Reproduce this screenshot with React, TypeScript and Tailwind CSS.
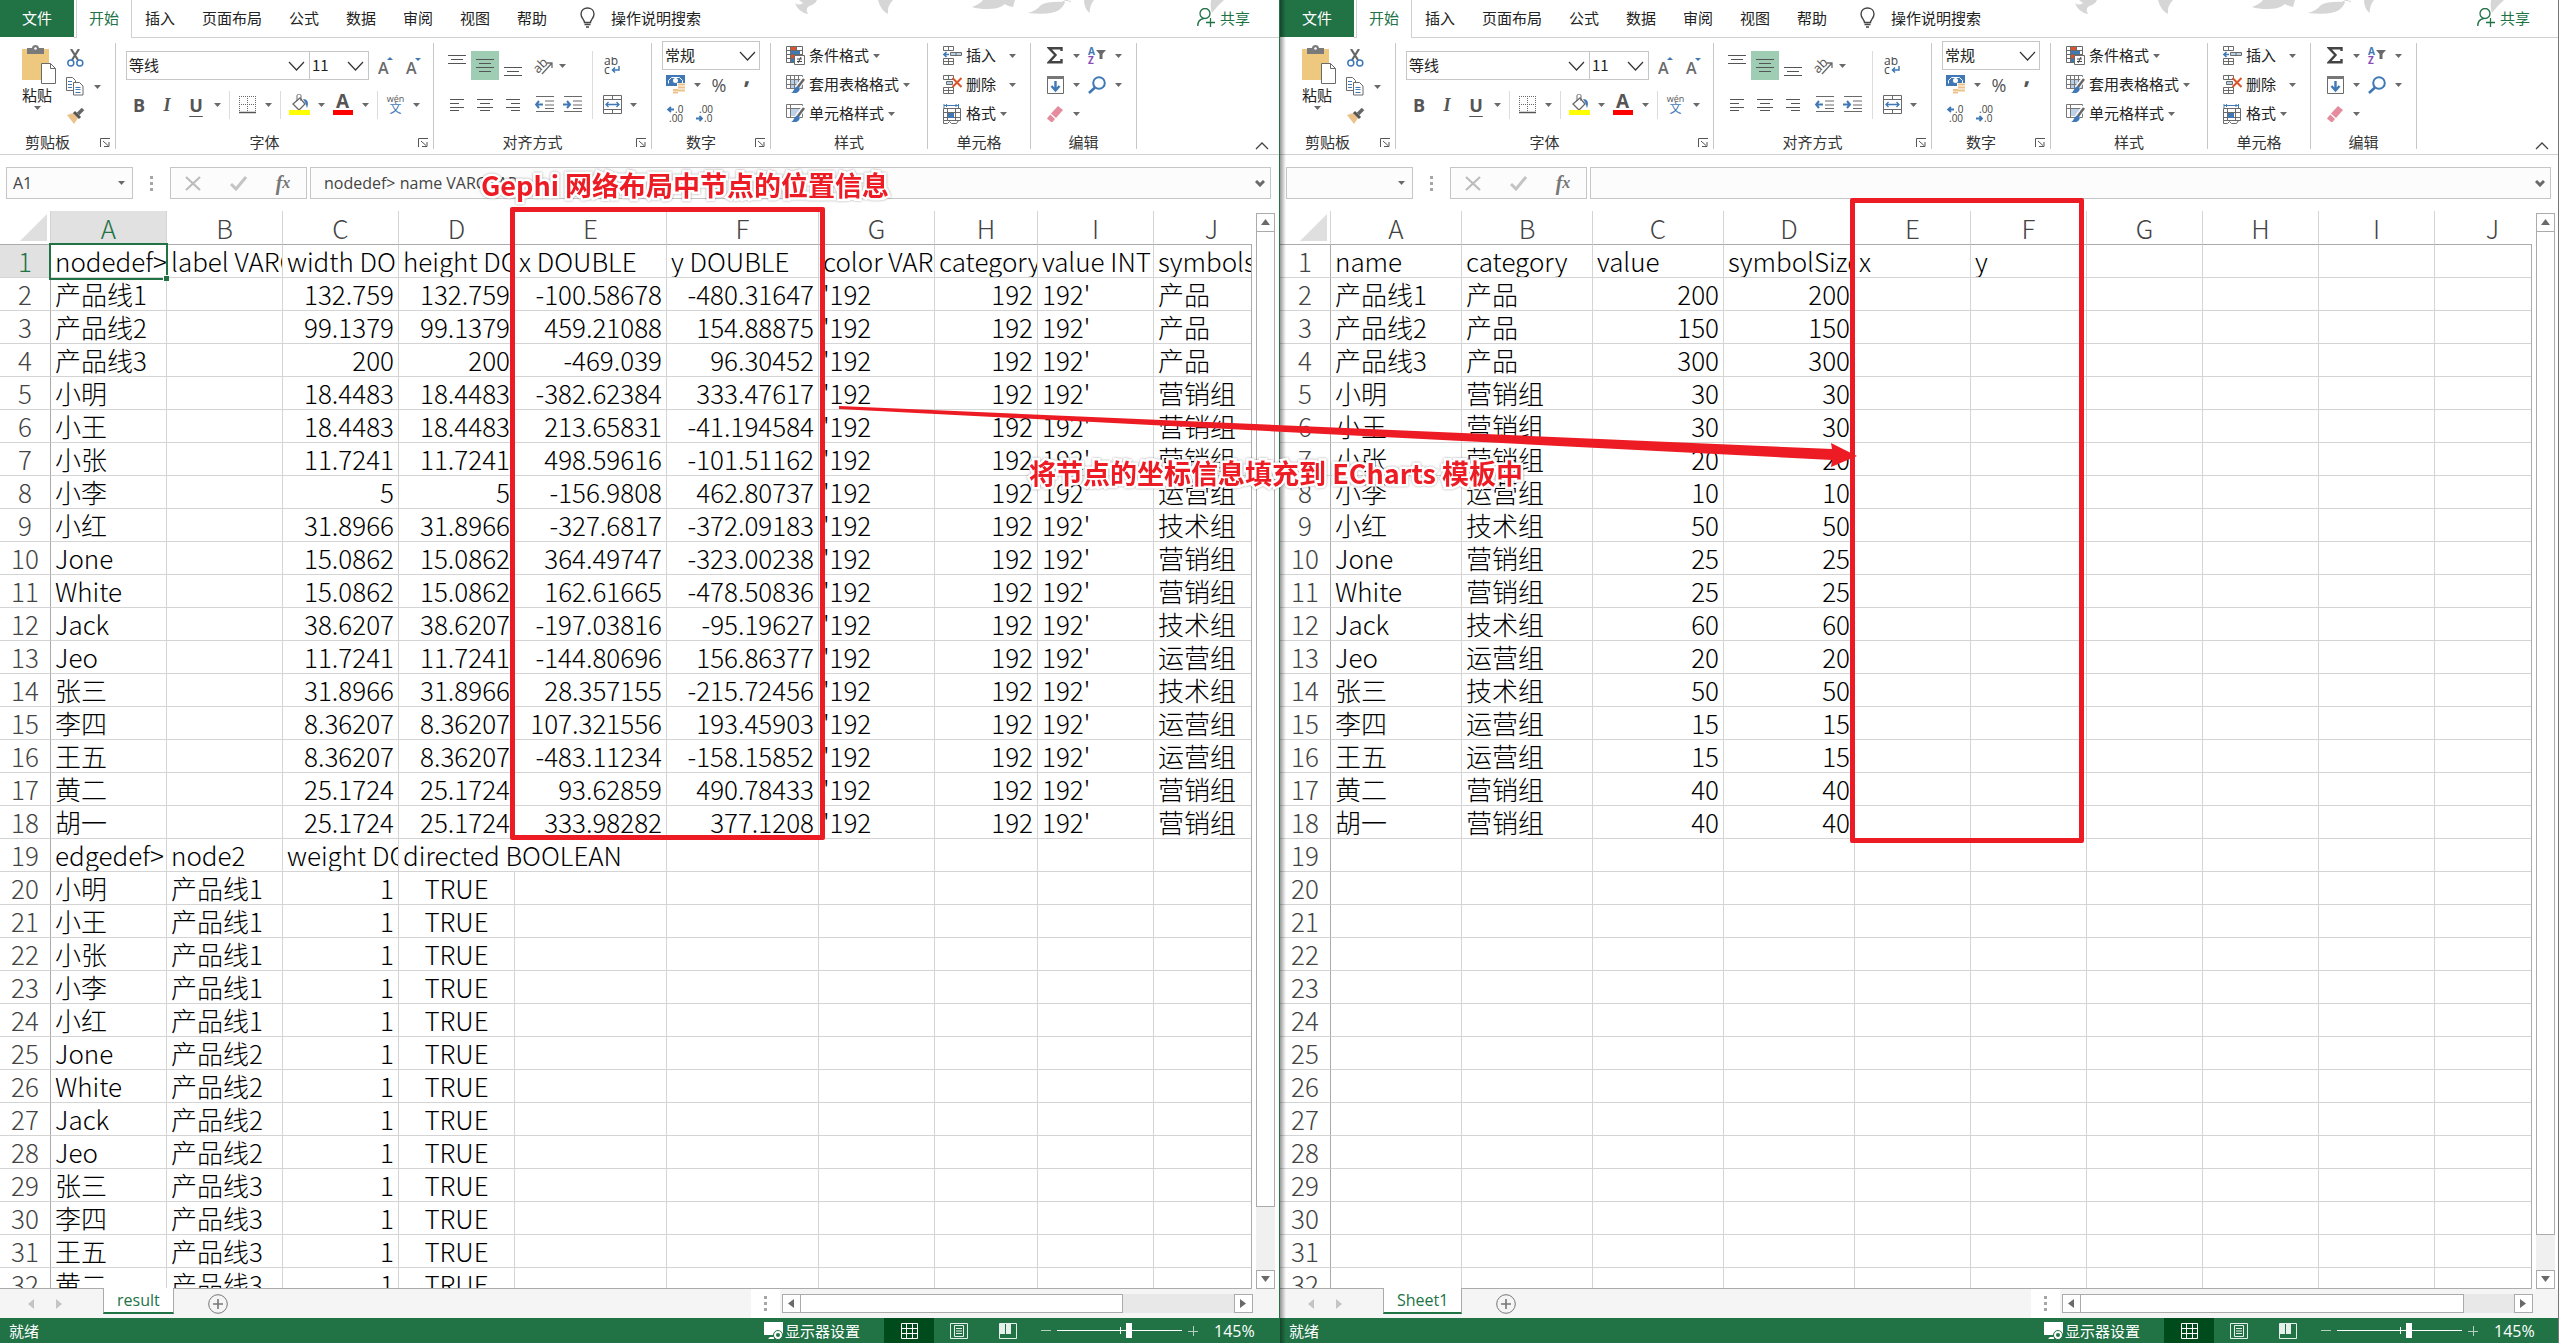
import React, { useState } from 'react';

const UI_FONT = "font-['Noto_Sans_CJK_SC',sans-serif]";
const LATIN_FONT = "font-['Open_Sans','Noto_Sans_CJK_SC',sans-serif]";

interface Sheet {
  name: string;
  activeCell: string;
  formula: string;
  selected: boolean;
  widths: number[];
  rows: string[][];
  hThumb: string;
  vThumb: string;
}

const PEOPLE = ['小明', '小王', '小张', '小李', '小红', 'Jone', 'White', 'Jack', 'Jeo', '张三', '李四', '王五', '黄二', '胡一'];

const NODES: [string, string, string, string, string, string][] = [
  // name, size, x, y, category, value
  ['产品线1', '132.759', '-100.58678', '-480.31647', '产品', '200'],
  ['产品线2', '99.1379', '459.21088', '154.88875', '产品', '150'],
  ['产品线3', '200', '-469.039', '96.30452', '产品', '300'],
  ['小明', '18.4483', '-382.62384', '333.47617', '营销组', '30'],
  ['小王', '18.4483', '213.65831', '-41.194584', '营销组', '30'],
  ['小张', '11.7241', '498.59616', '-101.51162', '营销组', '20'],
  ['小李', '5', '-156.9808', '462.80737', '运营组', '10'],
  ['小红', '31.8966', '-327.6817', '-372.09183', '技术组', '50'],
  ['Jone', '15.0862', '364.49747', '-323.00238', '营销组', '25'],
  ['White', '15.0862', '162.61665', '-478.50836', '营销组', '25'],
  ['Jack', '38.6207', '-197.03816', '-95.19627', '技术组', '60'],
  ['Jeo', '11.7241', '-144.80696', '156.86377', '运营组', '20'],
  ['张三', '31.8966', '28.357155', '-215.72456', '技术组', '50'],
  ['李四', '8.36207', '107.321556', '193.45903', '运营组', '15'],
  ['王五', '8.36207', '-483.11234', '-158.15852', '运营组', '15'],
  ['黄二', '25.1724', '93.62859', '490.78433', '营销组', '40'],
  ['胡一', '25.1724', '333.98282', '377.1208', '营销组', '40'],
];

const EDGES = PEOPLE.slice(0, 13).map((name, i) => [name, `产品线${i < 5 ? 1 : i < 9 ? 2 : 3}`, '1', 'TRUE']);

const RESULT: Sheet = {
  name: 'result',
  activeCell: 'A1',
  formula: 'nodedef> name VARCHAR',
  selected: true,
  widths: [116, 116, 116, 116, 152, 152, 116, 103, 116, 116],
  rows: [
    ['nodedef> name', 'label VARCHAR', 'width DOUBLE', 'height DOUBLE', 'x DOUBLE', 'y DOUBLE', 'color VARCHAR', 'category', 'value INT', 'symbols'],
    ...NODES.map(([name, size, x, y, category]) => [name, '', size, size, x, y, "'192", '192', "192'", category]),
    ['edgedef> node1', 'node2', 'weight DOUBLE', 'directed BOOLEAN'],
    ...EDGES,
  ],
  hThumb: 'w-[323px]',
  vThumb: 'mb-[63px]',
};

const TEMPLATE: Sheet = {
  name: 'Sheet1',
  activeCell: '',
  formula: '',
  selected: false,
  widths: [131, 131, 131, 131, 116, 116, 116, 116, 116, 116],
  rows: [
    ['name', 'category', 'value', 'symbolSize', 'x', 'y'],
    ...NODES.map(([name, , , , category, value]) => [name, category, value, value]),
  ],
  hThumb: 'w-[384px]',
  vThumb: 'mb-[35px]',
};

/* ---------- icons ---------- */

interface IconProps {
  w: number;
  h: number;
  children: React.ReactNode;
}

const Icon: React.FC<IconProps> = ({ w, h, children }) => (
  <svg width={w} height={h} viewBox={`0 0 ${w} ${h}`} fill="none" stroke="#6a6a6a" className="shrink-0">{children}</svg>
);

const Caret = () => <svg width="7" height="4" viewBox="0 0 7 4" className="shrink-0"><path d="M0 0h7L3.5 4z" fill="#6a6a6a" /></svg>;

const PasteIcon = () => (
  <Icon w={34} h={39}>
    <path d="M0 4h27v31H0z" fill="#edc87e" stroke="none" />
    <path d="M5 3h5c0-4 7-4 7 0h5v6H5z" fill="#7a7a7a" stroke="none" />
    <circle cx="13.5" cy="3.5" r="1.3" fill="#fff" stroke="none" />
    <path d="M19.5 18.5h9l5 5v15h-14z" fill="#fff" />
    <path d="M28.5 18.5v5h5" />
  </Icon>
);

const CutIcon = () => (
  <Icon w={17} h={18}>
    <path d="M4 0l7 11M12 0L5 11" stroke="#666" strokeWidth="2.2" />
    <circle cx="3.8" cy="14" r="3" stroke="#3f78b5" strokeWidth="1.5" />
    <circle cx="12.8" cy="14" r="3" stroke="#3f78b5" strokeWidth="1.5" />
  </Icon>
);

const CopyIcon = () => (
  <Icon w={18} h={19}>
    <path d="M.5.5h6l3 3v10h-9z" fill="#fff" />
    <path d="M7.5 5.5h6l3.5 3.5v9h-9.5z" fill="#fff" />
    <path d="M2 4.5h4M2 7.5h4M2 10.5h4M9.5 10.5h5M9.5 12.5h5M9.5 15.5h5" stroke="#3f78b5" />
  </Icon>
);

const BrushIcon = () => (
  <Icon w={18} h={16}>
    <path d="M0 7l6-2 5 5-4 6z" fill="#edc28a" stroke="none" />
    <path d="M7 4l6 6" strokeWidth="3" stroke="#555" />
    <path d="M11 6l5-5" strokeWidth="3.5" stroke="#666" />
  </Icon>
);

const FontSizeIcon = ({ up }: { up: boolean }) => (
  <Icon w={16} h={18}>
    <text x="0" y="17" fontSize="16" fontWeight="600" fill="#6a6a6a" stroke="none" fontFamily="Open Sans">A</text>
    <path d={up ? 'M9 3h6L12 0z' : 'M9 1h6l-3 3z'} fill="#3f78b5" stroke="none" />
  </Icon>
);

const BorderIcon = () => (
  <Icon w={17} h={18}>
    <path d="M.5 0v16M16.5 0v16M8.5 0v16M0 .5h17M0 8.5h17" strokeDasharray="1 1" />
    <path d="M0 16.5h17" stroke="#555" strokeWidth="1.5" />
  </Icon>
);

const FillIcon = () => (
  <Icon w={21} h={21}>
    <path d="M4 10l7-6 5 6-6 6z" fill="#fff" strokeWidth="1.3" />
    <path d="M8 7V2c0-2.5 4-2.5 4 0v5" />
    <path d="M14 5c5 0 6 4 4 9-1-3-1-5-4-9z" fill="#3f78b5" stroke="none" />
    <path d="M0 16h21v5H0z" fill="#ff0" stroke="none" />
  </Icon>
);

const FontColorIcon = () => (
  <Icon w={20} h={21}>
    <text x="3" y="14" fontSize="19" fontWeight="700" fill="#555" stroke="none" fontFamily="Open Sans">A</text>
    <path d="M0 16h20v5H0z" fill="#f00" stroke="none" />
  </Icon>
);

const LinesIcon = ({ d, h }: { d: string; h: number }) => <Icon w={18} h={h}><path d={d} stroke="#555" /></Icon>;

const ALIGN_TOP = 'M0 .5h18M3 4.5h12M0 8.5h18';
const ALIGN_MIDDLE = 'M0 .5h18M3 4.5h12M0 8.5h18M3 12.5h12';
const TEXT_LEFT = 'M2 .5h14M2 4.5h9M2 8.5h14M2 11.5h9';
const TEXT_CENTER = 'M1 .5h16M4 4.5h10M1 8.5h16M4 11.5h10';
const TEXT_RIGHT = 'M2 .5h14M7 4.5h9M2 8.5h14M7 11.5h9';

const OrientationIcon = () => (
  <Icon w={20} h={18}>
    <text x="1" y="14" fontSize="13" fill="#555" stroke="none" fontFamily="Open Sans" transform="rotate(-45 6 12)">ab</text>
    <path d="M8 17L18 6M13 6h5v5" strokeWidth="1.3" />
  </Icon>
);

const IndentIcon = ({ out }: { out: boolean }) => (
  <Icon w={19} h={17}>
    <path d="M1 .5h18M10 5h9M10 9h9M1 15.5h18M10 12.5h9" />
    <path d={out ? 'M8 8.5H1M4 5L1 8.5 4 12' : 'M0 8.5h7M4 5l3 3.5L4 12'} stroke="#3f78b5" strokeWidth="2" />
  </Icon>
);

const WrapIcon = () => (
  <Icon w={16} h={18}>
    <text x="0" y="8" fontSize="12" fill="#444" stroke="none" fontFamily="Open Sans">ab</text>
    <text x="0" y="17" fontSize="12" fill="#444" stroke="none" fontFamily="Open Sans">c</text>
    <path d="M15 9v4H9M11 10.5L8.5 13l2.5 2.5" stroke="#3f78b5" strokeWidth="1.5" />
  </Icon>
);

const MergeIcon = () => (
  <Icon w={19} h={19}>
    <path d="M.5.5h18v18H.5zM.5 4.5h18M.5 14.5h18M9.5.5v4M9.5 14.5v4" />
    <path d="M3 9.5h13M5.5 7L3 9.5 5.5 12M13.5 7l2.5 2.5-2.5 2.5" stroke="#3f78b5" strokeWidth="1.3" />
  </Icon>
);

const CurrencyIcon = () => (
  <Icon w={20} h={19}>
    <path d="M0 0h19v11H0z" fill="#3f78b5" stroke="none" />
    <path d="M2.5 8.5v-3l3-3h8l3 3v3" stroke="#fff" />
    <circle cx="9.5" cy="5.5" r="2.5" fill="#fff" stroke="none" />
    <path d="M11 8h8v11H6v-5h5z" fill="#fff" stroke="none" />
    <path d="M12 9.5h7M12 12.5h7M12 15.5h7M7 15h5M7 17.5h5" stroke="#edc28a" strokeWidth="2" />
  </Icon>
);

const DecimalIcon = ({ more }: { more: boolean }) => (
  <Icon w={18} h={18}>
    <text x={more ? 8 : 4} y="8" fontSize="10" fill="#444" stroke="none" fontFamily="Open Sans">{more ? '.0' : '.00'}</text>
    <text x={more ? 2 : 9} y="17" fontSize="10" fill="#444" stroke="none" fontFamily="Open Sans">{more ? '.00' : '.0'}</text>
    <path d={more ? 'M7 4.5H1M4 2L1 4.5 4 7' : 'M1 13.5h6M4.5 11L7 13.5 4.5 16'} stroke="#3f78b5" strokeWidth="1.8" />
  </Icon>
);

const ConditionalIcon = () => (
  <Icon w={19} h={19}>
    <path d="M.5.5h16v16H.5zM4.5.5v16M10.5.5v16M.5 4.5h16M.5 8.5h16M.5 12.5h16" />
    <path d="M5 1h5v3H5zM5 9h4v3H5z" fill="#d9532c" stroke="none" />
    <path d="M5 5h9v3H5zM5 13h3v3H5z" fill="#3f78b5" stroke="none" />
    <path d="M8.5 9.5h10v9h-10z" fill="#fff" />
    <path d="M11 13h5M11 15.5h5M15 11l-3 6" stroke="#444" />
  </Icon>
);

const TableStyleIcon = ({ solid }: { solid?: boolean }) => (
  <Icon w={19} h={19}>
    <path d={solid ? 'M4 4h10v8H4z' : 'M5 5h12v9H5z'} fill="#bcd0e6" stroke="none" />
    <path d={solid ? 'M.5.5h16v13H.5zM4.5.5v13M.5 4.5h16' : 'M.5.5h16v13H.5zM4.5.5v13M8.5.5v13M12.5.5v13M.5 4.5h16M.5 9.5h16'} stroke="#777" />
    <path d="M18.5 3L11 13" stroke="#fff" strokeWidth="5" />
    <path d="M18 4l-6 8" stroke="#666" strokeWidth="2.5" />
    <path d="M12 11c3 2 2 6-2 7H5c3-1 3-6 7-7z" fill="#3f78b5" stroke="none" />
  </Icon>
);

const InsertIcon = () => (
  <Icon w={19} h={19}>
    <path d="M.5.5h10v4H.5zM5.5.5v4M.5 12.5h10v6H.5zM5.5 12.5v6M.5 15.5h10" />
    <path d="M7.5 6.5h11v3h-11zM13 6.5v3" fill="#bcd0e6" />
    <path d="M6 8.5H1M3.5 6L1 8.5 3.5 11" stroke="#3f78b5" strokeWidth="1.6" />
  </Icon>
);

const DeleteIcon = () => (
  <Icon w={19} h={19}>
    <path d="M.5.5h10v4H.5zM5.5.5v4M.5 12.5h10v6H.5zM5.5 12.5v6M.5 15.5h10" />
    <path d="M3.5 6.5h6v3h-6z" fill="#bcd0e6" />
    <path d="M9.5 3l9 9M18.5 3l-9 9" stroke="#d9532c" strokeWidth="2" />
  </Icon>
);

const FormatIcon = () => (
  <Icon w={19} h={20}>
    <path d="M1 1.5h15M1 0v4M15.5 0v4M3.5 0v3M13 0v3" stroke="#3f78b5" />
    <path d="M.5 4.5h17v12H.5zM4.5 4.5v12M12.5 4.5v12M.5 8.5h17M.5 13.5h17M.5 16.5v3h4l2-2 2 2h5l2-3" />
    <path d="M5 9h6v5H5z" fill="#3f78b5" stroke="none" />
  </Icon>
);

const SumIcon = () => <Icon w={16} h={17}><path d="M14.5 4V1.2H2L8.5 8 2 15.2h12.5V12" strokeWidth="2.4" stroke="#444" /></Icon>;

const SortIcon = () => (
  <Icon w={18} h={18}>
    <text x="0" y="8" fontSize="10" fontWeight="700" fill="#3f78b5" stroke="none" fontFamily="Open Sans">A</text>
    <text x="0" y="17" fontSize="10" fontWeight="700" fill="#8a4fb5" stroke="none" fontFamily="Open Sans">Z</text>
    <path d="M8 3h10l-3.5 4v5h-3V7z" fill="#6a6a6a" stroke="none" />
  </Icon>
);

const FillDownIcon = () => (
  <Icon w={17} h={18}>
    <path d="M.5 1.5h16v16H.5z" />
    <path d="M0 0h17v3H0z" fill="#777" stroke="none" />
    <path d="M8.5 5v9M4.5 10l4 4.5 4-4.5" stroke="#3f78b5" strokeWidth="2.4" />
  </Icon>
);

const FindIcon = () => (
  <Icon w={18} h={18}>
    <circle cx="11" cy="7" r="5.8" stroke="#3f78b5" strokeWidth="2" />
    <path d="M7 11.5L1 17" stroke="#3f78b5" strokeWidth="2.6" />
  </Icon>
);

const EraserIcon = () => (
  <Icon w={16} h={16}>
    <path d="M11 0l5 4L9 12 4 7.5z" fill="#e58b9d" stroke="none" />
    <path d="M3.2 8.5L8 13l-2.5 3H4l-4-3.5z" fill="#e58b9d" stroke="none" />
  </Icon>
);

const Chevron = () => <svg width="17" height="10" viewBox="0 0 17 10" fill="none" stroke="#333" strokeWidth="1.2" className="pointer-events-none shrink-0"><path d="M1 1l7.5 8L16 1" /></svg>;

/* ---------- ribbon ---------- */

interface ToolProps {
  label: string;
  className?: string;
  children: React.ReactNode;
}

const Tool: React.FC<ToolProps> = ({ label, className = 'w-7', children }) => (
  <button type="button" aria-label={label} className={`flex h-[29px] shrink-0 items-center justify-center ${className}`}>{children}</button>
);

const More = ({ label }: { label: string }) => <Tool label={`${label}选项`} className="w-[14px]"><Caret /></Tool>;

const Divider = () => <div className="flex w-[10px] justify-center"><div className="h-7 w-px bg-[#dcdcdc]" /></div>;

interface GroupProps {
  title: string;
  width: string;
  launcher?: boolean;
  children: React.ReactNode;
}

const Group: React.FC<GroupProps> = ({ title, width, launcher, children }) => (
  <>
    <section className={`flex shrink-0 flex-col ${width}`}>
      <div className="flex-1">{children}</div>
      <div className="mb-1 flex h-4 items-center text-[15px] leading-4 text-[#333]">
        <h3 className="flex-1 text-center">{title}</h3>
        {launcher && (
          <button type="button" aria-label={`${title}设置`} className="flex w-5 justify-center">
            <svg width="10" height="9" viewBox="0 0 10 9" fill="none" stroke="#555"><path d="M.5 9V.5H10M3 3l5 4.5M9 4v4.5H4" /></svg>
          </button>
        )}
      </div>
    </section>
    <div className="my-[5px] w-px shrink-0 bg-[#c8c8c8]" />
  </>
);

interface ComboProps {
  label: string;
  value: string;
  className: string;
}

const Combo: React.FC<ComboProps> = ({ label, value, className }) => (
  <div className={`flex h-[29px] items-center border border-[#c6c6c6] bg-white ${className}`}>
    <select aria-label={label} defaultValue={value} className="h-[27px] min-w-0 flex-1 appearance-none bg-transparent pb-[2px] pl-[2px] text-[15px] leading-6 text-[#222] outline-none">
      <option>{value}</option>
    </select>
    <Chevron />
  </div>
);

interface CommandProps {
  icon: React.ReactNode;
  label: string;
  wide?: boolean;
}

const Command: React.FC<CommandProps> = ({ icon, label, wide }) => (
  <button type="button" className="flex h-[29px] items-center whitespace-nowrap text-[15px] leading-5 text-[#222]">
    <span className="w-[23px]">{icon}</span>
    <span className="pb-[2px]">{label}</span>
    <span className={wide ? 'ml-[13px]' : 'ml-1'}><Caret /></span>
  </button>
);

const TABS = ['插入', '页面布局', '公式', '数据', '审阅', '视图', '帮助'];

const TabBar = () => (
  <nav className="relative flex h-[38px] shrink-0 items-end text-[15px] leading-5">
    <svg width="440" height="15" viewBox="0 0 440 15" fill="#d6d6d6" className="absolute right-[49px] top-0">
      <path d="M5 3Q9 6 13 3L9 0H27Q26 3 22 5Q14 7 18 14Q8 12 5 3z" />
      <path d="M88 0H103Q97 6 98 14Q91 11 88 0z" />
      <path d="M182 7Q190 4 193 0H217Q214 9 198 9Q188 9 182 7z" />
      <path d="M208 0H225L223 7Q216 6 208 0z" />
      <path d="M238 13Q246 11 251 5Q258 1 275 2Q272 12 257 13.5Q246 14 238 13z" />
      <path d="M270 4q6-6 11-2" fill="none" stroke="#d6d6d6" />
      <path d="M294 0H304Q299 6 300 13Q294 9 294 0z" />
      <path d="M421 0H434Q427 6 422 13Q420 8 421 0z" />
    </svg>
    <button type="button" className="h-[37px] w-[74px] self-start bg-[#217346] pb-[2px] text-white">文件</button>
    <div className="w-[2px] self-stretch border-b border-[#d0d0d0]" />
    <button type="button" className="h-full w-14 border-x border-[#d0d0d0] pb-[3px] text-[#217346]">开始</button>
    <div className="flex flex-1 items-center self-stretch border-b border-[#d0d0d0] pb-[2px] pl-[13px] text-[#222]">
      <div className="flex gap-[27px]">
        {TABS.map(tab => <button key={tab} type="button">{tab}</button>)}
      </div>
      <svg width="15" height="21" viewBox="0 0 15 21" fill="none" stroke="#444" strokeWidth="1.4" className="ml-[33px]">
        <path d="M4.5 15.5c0-3-3.5-4-3.5-8.5 0-8 13-8 13 0 0 4.5-3.5 5.5-3.5 8.5zM4.5 17.5h6M6 20h3" />
      </svg>
      <button type="button" className="ml-4">操作说明搜索</button>
      <button type="button" className="relative ml-auto mr-[29px] flex items-center gap-1 text-[#217346]">
        <svg width="19" height="19" viewBox="0 0 19 19" fill="none" stroke="#217346" strokeWidth="1.3">
          <circle cx="8" cy="5.5" r="5" />
          <path d="M.7 18c0-5 3-7 6-7.5M9 14.5h9M13.5 10v9" />
        </svg>
        共享
      </button>
    </div>
  </nav>
);

const Ribbon = () => (
  <div className="flex h-[117px] shrink-0 border-b border-[#d0d0d0]">
    <Group title="剪贴板" width="w-[115px]" launcher>
      <div className="flex pl-[2px] pt-[7px]">
        <button type="button" className="flex w-[58px] flex-col items-start pl-5 text-[15px] leading-[22px] text-[#222]">
          <PasteIcon />
          <span>粘贴</span>
          <span className="ml-3"><Caret /></span>
        </button>
        <div className="-mt-[2px]">
          <Tool label="剪切" className="w-[30px]"><CutIcon /></Tool>
          <div className="flex">
            <Tool label="复制" className="w-[30px]"><CopyIcon /></Tool>
            <More label="复制" />
          </div>
          <Tool label="格式刷" className="w-[32px]"><BrushIcon /></Tool>
        </div>
      </div>
    </Group>

    <Group title="字体" width="w-[317px]" launcher>
      <div className="flex flex-col gap-[10px] pl-[10px] pt-[13px]">
        <div className="flex">
          <Combo label="字体" value="等线" className="w-[184px] pr-1" />
          <Combo label="字号" value="11" className="-ml-px w-[60px] pr-1" />
          <Tool label="增大字号" className="ml-[3px] w-7"><FontSizeIcon up /></Tool>
          <Tool label="减小字号"><FontSizeIcon up={false} /></Tool>
        </div>
        <div className={`flex items-center text-lg text-[#555] ${LATIN_FONT}`}>
          <Tool label="加粗" className="w-[26px] font-bold">B</Tool>
          <Tool label="倾斜" className="w-[30px] font-['Liberation_Serif',serif] font-bold italic">I</Tool>
          <Tool label="下划线" className="w-7 font-bold underline underline-offset-4">U</Tool>
          <More label="下划线" />
          <Divider />
          <Tool label="边框" className="w-[27px]"><BorderIcon /></Tool>
          <More label="边框" />
          <Divider />
          <Tool label="填充颜色" className="w-[29px]"><FillIcon /></Tool>
          <More label="填充颜色" />
          <Tool label="字体颜色" className="w-[30px]"><FontColorIcon /></Tool>
          <More label="字体颜色" />
          <Divider />
          <Tool label="拼音" className="w-[27px] flex-col">
            <span className="text-[9px] leading-[8px]">wén</span>
            <span className="text-[12px] leading-[12px] text-[#3f78b5]">文</span>
          </Tool>
          <More label="拼音" />
        </div>
      </div>
    </Group>

    <Group title="对齐方式" width="w-[217px]" launcher>
      <div className="flex pl-[9px] pt-[13px]">
        <div className="flex w-[143px] flex-col gap-[10px]">
          <div className="flex">
            <Tool label="顶端对齐" className="w-7 pb-3"><LinesIcon d={ALIGN_TOP} h={9} /></Tool>
            <Tool label="垂直居中" className="w-7 bg-[#9fcdb3]"><LinesIcon d={ALIGN_MIDDLE} h={13} /></Tool>
            <Tool label="底端对齐" className="w-7 pt-3"><LinesIcon d={ALIGN_TOP} h={9} /></Tool>
            <Tool label="方向" className="ml-[3px] w-7"><OrientationIcon /></Tool>
            <Tool label="方向选项" className="w-2"><Caret /></Tool>
          </div>
          <div className="flex">
            <Tool label="左对齐"><LinesIcon d={TEXT_LEFT} h={12} /></Tool>
            <Tool label="居中"><LinesIcon d={TEXT_CENTER} h={12} /></Tool>
            <Tool label="右对齐"><LinesIcon d={TEXT_RIGHT} h={12} /></Tool>
            <Tool label="减少缩进量" className="ml-[3px] w-7"><IndentIcon out /></Tool>
            <Tool label="增加缩进量"><IndentIcon out={false} /></Tool>
          </div>
        </div>
        <div className="ml-[6px] h-[68px] w-px bg-[#dcdcdc]" />
        <div className="ml-[5px] flex flex-col gap-[10px]">
          <Tool label="自动换行"><WrapIcon /></Tool>
          <div className="flex">
            <Tool label="合并后居中"><MergeIcon /></Tool>
            <More label="合并后居中" />
          </div>
        </div>
      </div>
    </Group>

    <Group title="数字" width="w-[118px]" launcher>
      <div className="px-[10px] pt-[3px]">
        <Combo label="数字格式" value="常规" className="w-full pr-[3px]" />
        <div className={`flex text-[#555] ${LATIN_FONT}`}>
          <Tool label="会计数字格式"><CurrencyIcon /></Tool>
          <More label="会计数字格式" />
          <Tool label="百分比样式" className="w-[30px] text-lg">%</Tool>
          <Tool label="千位分隔样式" className="w-[26px] pb-5 text-2xl font-bold">,</Tool>
        </div>
        <div className="flex">
          <Tool label="增加小数位数"><DecimalIcon more /></Tool>
          <Tool label="减少小数位数"><DecimalIcon more={false} /></Tool>
        </div>
      </div>
    </Group>

    <Group title="样式" width="w-[156px]">
      <div className="flex flex-col items-start pl-[15px] pt-[3px]">
        <Command icon={<ConditionalIcon />} label="条件格式" />
        <Command icon={<TableStyleIcon />} label="套用表格格式" />
        <Command icon={<TableStyleIcon solid />} label="单元格样式" />
      </div>
    </Group>

    <Group title="单元格" width="w-[102px]">
      <div className="flex flex-col items-start pl-[15px] pt-[3px]">
        <Command icon={<InsertIcon />} label="插入" wide />
        <Command icon={<DeleteIcon />} label="删除" wide />
        <Command icon={<FormatIcon />} label="格式" />
      </div>
    </Group>

    <Group title="编辑" width="w-[105px]">
      <div className="pl-[10px] pt-[3px]">
        <div className="flex">
          <Tool label="求和"><SumIcon /></Tool>
          <More label="求和" />
          <Tool label="排序和筛选"><SortIcon /></Tool>
          <More label="排序和筛选" />
        </div>
        <div className="flex">
          <Tool label="填充"><FillDownIcon /></Tool>
          <More label="填充" />
          <Tool label="查找和选择"><FindIcon /></Tool>
          <More label="查找和选择" />
        </div>
        <div className="flex">
          <Tool label="清除"><EraserIcon /></Tool>
          <More label="清除" />
        </div>
      </div>
    </Group>

    <button type="button" aria-label="折叠功能区" className="mb-1 ml-auto mr-[10px] self-end">
      <svg width="14" height="8" viewBox="0 0 14 8" fill="none" stroke="#444" strokeWidth="1.3"><path d="M1 7l6-6 6 6" /></svg>
    </button>
  </div>
);

/* ---------- formula bar ---------- */

const Dots = () => (
  <div className="flex flex-col gap-[3px]">
    {[0, 1, 2].map(i => <div key={i} className="h-[3px] w-[3px] bg-[#a6a6a6]" />)}
  </div>
);

const FormulaBar = ({ sheet }: { sheet: Sheet }) => {
  const [cell, setCell] = useState(sheet.activeCell);
  const [formula, setFormula] = useState(sheet.formula);

  return (
    <div className={`flex h-14 shrink-0 items-center pl-[6px] pr-2 text-base text-[#444] ${LATIN_FONT}`}>
      <div className="flex h-8 w-[127px] items-center border border-[#c6c6c6] bg-[#fcfcfc] pr-[7px]">
        <input aria-label="名称框" value={cell} onChange={e => setCell(e.target.value)} className="min-w-0 flex-1 bg-transparent pl-[6px] outline-none" />
        <Caret />
      </div>
      <div className="flex w-[37px] justify-center"><Dots /></div>
      <div className="flex h-8 w-[137px] items-center border border-[#c6c6c6] bg-[#fcfcfc]">
        <Tool label="取消" className="w-[44px]">
          <svg width="16" height="15" viewBox="0 0 16 15" stroke="#bdbdbd" strokeWidth="2.2"><path d="M1 1l14 13M15 1L1 14" /></svg>
        </Tool>
        <Tool label="输入" className="w-[46px]">
          <svg width="17" height="15" viewBox="0 0 17 15" fill="none" stroke="#c4c4c4" strokeWidth="3"><path d="M1 8l5 5L16 1" /></svg>
        </Tool>
        <Tool label="插入函数" className="w-[44px] font-['Liberation_Serif',serif] text-xl font-bold italic text-[#777]">
          f<span className="text-base">x</span>
        </Tool>
      </div>
      <div className="ml-[3px] flex h-8 flex-1 items-center border border-[#c6c6c6] bg-[#fcfcfc] pr-[5px]">
        <input aria-label="编辑栏" value={formula} onChange={e => setFormula(e.target.value)} className="min-w-0 flex-1 bg-transparent pl-[13px] outline-none" />
        <svg width="10" height="7" viewBox="0 0 10 7" fill="none" stroke="#6a6a6a" strokeWidth="3"><path d="M1 1l4 4 4-4" /></svg>
      </div>
    </div>
  );
};

/* ---------- grid ---------- */

const ROW_COUNT = 32;

const cellAlign = (value: string) => {
  if (/^-?[\d.]+$/.test(value)) return 'text-right';
  return value === 'TRUE' ? 'text-center' : 'text-left';
};

const Grid = ({ sheet }: { sheet: Sheet }) => (
  <div className="relative min-w-0 flex-1 overflow-hidden border-b border-[#ababab]">
    <table className={`w-0 table-fixed border-separate border-spacing-0 text-[26px] font-light text-black ${UI_FONT}`}>
      <colgroup>
        <col className="w-[51px]" />
        {sheet.widths.map((width, i) => <col key={i} style={{ width }} />)}
      </colgroup>
      <thead>
        <tr className="h-[34px] leading-[33px] text-[#444]">
          <th className="h-[34px] border-b border-r border-b-[#ababab] border-r-[#d4d4d4] p-0">
            <svg width="27" height="27" viewBox="0 0 27 27" className="ml-auto mr-[3px]"><path d="M27 0v27H0z" fill="#dfdfdf" /></svg>
          </th>
          {sheet.widths.map((_, i) => {
            const active = sheet.selected && i === 0;
            return (
              <th key={i} scope="col" className={`border-b border-r border-b-[#ababab] border-r-[#d4d4d4] p-0 font-light ${active ? 'bg-[#e1e1e1] text-[#217346]' : ''}`}>
                {'ABCDEFGHIJ'[i]}
              </th>
            );
          })}
        </tr>
      </thead>
      <tbody>
        {Array.from({ length: ROW_COUNT }, (_, r) => (
          <tr key={r} className="leading-[32px]">
            <th scope="row" className={`h-[33px] border-b border-r border-b-[#d4d4d4] border-r-[#ababab] p-0 font-light ${sheet.selected && r === 0 ? 'bg-[#e1e1e1] text-[#217346]' : 'text-[#444]'}`}>
              {r + 1}
            </th>
            {sheet.widths.map((_, c) => {
              const value = sheet.rows[r]?.[c] ?? '';
              // long text runs on into the next cell when that one is empty
              const spills = r > 0 && value.length > 10 && !sheet.rows[r][c + 1] && cellAlign(value) === 'text-left';
              return (
                <td key={c} className={`h-[33px] whitespace-nowrap border-b border-[#d4d4d4] px-1 py-0 ${spills ? 'overflow-visible' : 'overflow-hidden border-r'} ${cellAlign(value)}`}>
                  {value}
                </td>
              );
            })}
          </tr>
        ))}
      </tbody>
    </table>
    {sheet.selected && (
      <div className="absolute left-[49px] top-[32px] h-[37px] w-[119px] border-[2px] border-[#217346]">
        <div className="absolute -bottom-[3px] -right-[3px] h-[6px] w-[6px] border-l border-t border-white bg-[#217346]" />
      </div>
    )}
    <div className="absolute bottom-0 right-0 top-[34px] w-px bg-[#ababab]" />
  </div>
);

const ARROWS = {
  up: 'M0 6h9L4.5 0z',
  down: 'M0 0h9L4.5 6z',
  left: 'M6 0v9L0 4.5z',
  right: 'M0 0v9l6-4.5z',
};

const ScrollButton = ({ dir, label }: { dir: keyof typeof ARROWS; label: string }) => (
  <button type="button" aria-label={label} className="flex h-[19px] w-[19px] shrink-0 items-center justify-center border border-[#ababab] bg-white">
    <svg width="9" height="9" viewBox={dir === 'up' || dir === 'down' ? '0 -1 9 9' : '-1 0 9 9'}><path d={ARROWS[dir]} fill="#6a6a6a" /></svg>
  </button>
);

const VerticalScroll = ({ sheet }: { sheet: Sheet }) => (
  <div className="flex w-[27px] flex-col px-1 pt-[2px]">
    <ScrollButton dir="up" label="向上滚动" />
    <div className="-mt-px flex flex-1 flex-col bg-[#f0f0f0]">
      <div className={`flex-1 border border-[#ababab] bg-white ${sheet.vThumb}`} />
    </div>
    <ScrollButton dir="down" label="向下滚动" />
  </div>
);

const SheetBar = ({ sheet }: { sheet: Sheet }) => (
  <div className="flex h-[29px] shrink-0 bg-[#f5f5f5]">
    <div className="flex w-[103px] items-center gap-[22px] pl-[28px]">
      <button type="button" aria-label="上一个工作表"><svg width="6" height="10" viewBox="0 0 6 10"><path d="M6 0v10L0 5z" fill="#c4c4c4" /></svg></button>
      <button type="button" aria-label="下一个工作表"><svg width="6" height="10" viewBox="0 0 6 10"><path d="M0 0v10l6-5z" fill="#c4c4c4" /></svg></button>
    </div>
    <button type="button" className={`relative -mt-px h-[26px] border-x border-b-2 border-x-[#ababab] border-b-[#217346] bg-white px-[13px] text-base leading-5 text-[#217346] ${LATIN_FONT}`}>{sheet.name}</button>
    <button type="button" aria-label="新工作表" className="ml-[34px]">
      <svg width="20" height="20" viewBox="0 0 20 20" fill="none" stroke="#777"><circle cx="10" cy="10" r="9.3" /><path d="M10 5v10M5 10h10" strokeWidth="1.6" /></svg>
    </button>
    <div className="ml-auto flex w-[29px] items-center justify-center bg-white"><Dots /></div>
    <div className="ml-[2px] mr-[26px] flex w-[471px] items-center">
      <ScrollButton dir="left" label="向左滚动" />
      <div className="-ml-px flex flex-1 bg-[#e8e8e8]">
        <div className={`h-[19px] border border-[#ababab] bg-white ${sheet.hThumb}`} />
      </div>
      <ScrollButton dir="right" label="向右滚动" />
    </div>
  </div>
);

const StatusBar = () => {
  const [zoom, setZoom] = useState(145);

  return (
    <footer className="flex h-[25px] shrink-0 items-center bg-[#217346] text-[15px] leading-5 text-white">
      <span className="pl-[9px]">就绪</span>
      <button type="button" className="ml-auto flex items-center gap-px">
        <svg width="20" height="19" viewBox="0 0 20 19">
          <path d="M0 1h19v13H0zM6 16h4v2H4z" fill="#fff" />
          <circle cx="14" cy="14" r="4.5" fill="#fff" stroke="#217346" />
          <circle cx="14" cy="14" r="2" fill="#217346" />
        </svg>
        显示器设置
      </button>
      <button type="button" aria-label="普通" className="ml-6 flex h-full w-[50px] items-center justify-center bg-[#004b1c]">
        <svg width="17" height="16" viewBox="0 0 17 16" fill="none" stroke="#fff"><path d="M.5.5h16v15H.5zM5.5.5v15M11.5.5v15M.5 5.5h16M.5 10.5h16" /></svg>
      </button>
      <button type="button" aria-label="页面布局" className="flex w-[49px] justify-center">
        <svg width="18" height="16" viewBox="0 0 18 16" fill="none" stroke="#e6f0ea"><path d="M.5.5h17v15H.5zM4.5 2.5h9v11h-9zM6 5.5h6M6 8h6M6 10.5h6" /></svg>
      </button>
      <button type="button" aria-label="分页预览" className="flex w-[50px] justify-center">
        <svg width="18" height="16" viewBox="0 0 18 16" fill="none" stroke="#e6f0ea"><path d="M.5.5h17v15H.5z" /><path d="M1 0h5v11H1zM7 0h5v11H7z" fill="#e6f0ea" stroke="none" /></svg>
      </button>
      <button type="button" aria-label="缩小" className="ml-2 flex w-[10px] justify-center"><span className="h-px w-[10px] bg-[#b5d0c0]" /></button>
      <div className="relative ml-[6px] flex w-[125px] items-center">
        <div className="absolute left-1/2 h-[7px] w-px bg-white" />
        <input
          type="range"
          aria-label="显示比例"
          min={10}
          max={242}
          value={zoom}
          onChange={e => setZoom(Number(e.target.value))}
          className="relative h-4 w-full appearance-none bg-transparent [&::-webkit-slider-runnable-track]:h-px [&::-webkit-slider-runnable-track]:bg-white [&::-webkit-slider-thumb]:-mt-[7px] [&::-webkit-slider-thumb]:h-[15px] [&::-webkit-slider-thumb]:w-[6px] [&::-webkit-slider-thumb]:appearance-none [&::-webkit-slider-thumb]:bg-white"
        />
      </div>
      <button type="button" aria-label="放大" className="ml-[6px]">
        <svg width="10" height="10" viewBox="0 0 10 10" stroke="#b5d0c0"><path d="M0 5.5h10M5.5 0v10" /></svg>
      </button>
      <output className={`ml-[16px] w-[65px] text-base leading-5 ${LATIN_FONT}`}>{zoom}%</output>
    </footer>
  );
};

const Workbook = ({ sheet }: { sheet: Sheet }) => (
  <section aria-label={sheet.name} className="flex min-h-0 min-w-0 flex-col overflow-hidden bg-white">
    <TabBar />
    <Ribbon />
    <FormulaBar sheet={sheet} />
    <div className="flex min-h-0 flex-1">
      <Grid sheet={sheet} />
      <VerticalScroll sheet={sheet} />
    </div>
    <SheetBar sheet={sheet} />
    <StatusBar />
  </section>
);

/* ---------- markup drawn over both workbooks ---------- */

const NOTE = 'pointer-events-none absolute whitespace-nowrap text-[27px] font-bold leading-8 text-[#ed1c24] [-webkit-text-stroke:5px_#fff] [paint-order:stroke_fill] drop-shadow-[0_0_1px_rgba(0,0,0,0.35)]';

const Annotations = () => (
  <>
    <div className="pointer-events-none absolute left-[510px] top-[207px] h-[633px] w-[315px] rounded-xs border-[5px] border-[#ed1c24]" />
    <div className="pointer-events-none absolute left-[1850px] top-[198px] h-[645px] w-[234px] rounded-xs border-[5px] border-[#ed1c24]" />
    <svg width="1020" height="64" viewBox="0 0 1020 64" className="pointer-events-none absolute left-[838px] top-[405px]">
      <path d="M1 1L994 44 993 38 1019 51 993 62 994 55 1 4z" fill="#ed1c24" />
    </svg>
    <p className={`left-[481px] top-[169px] ${NOTE}`}>Gephi 网络布局中节点的位置信息</p>
    <p className={`left-[1029px] top-[457px] ${NOTE}`}>将节点的坐标信息填充到 ECharts 模板中</p>
  </>
);

const App: React.FC = () => (
  <main className={`relative grid h-screen grid-cols-[1fr_1px_1fr] grid-rows-[minmax(0,1fr)] overflow-hidden ${UI_FONT}`}>
    <Workbook sheet={RESULT} />
    <div className="bg-[#217346]" />
    <div className="relative grid min-h-0 min-w-0 grid-rows-[minmax(0,1fr)]">
      <Workbook sheet={TEMPLATE} />
      <div className="pointer-events-none absolute inset-y-0 left-0 w-[6px] bg-linear-to-r from-black/40 to-transparent" />
      <div className="pointer-events-none absolute inset-y-0 right-0 w-px bg-[#777]" />
    </div>
    <Annotations />
  </main>
);

export default App;
